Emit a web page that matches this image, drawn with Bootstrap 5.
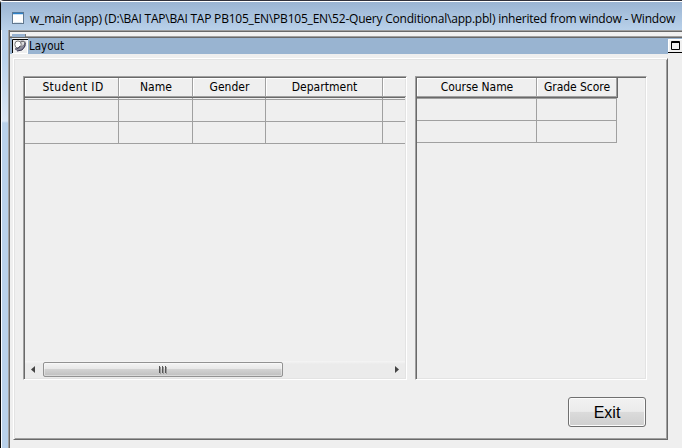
<!DOCTYPE html>
<html lang="en">
<head>
<meta charset="utf-8">
<meta name="viewport" content="width=device-width, initial-scale=1">
<title>w_main (app)</title>
<link href="https://cdn.jsdelivr.net/npm/bootstrap@5.3.0/dist/css/bootstrap.min.css" rel="stylesheet">
<style>
*{box-sizing:border-box}
body{width:682px;height:448px;margin:0;overflow:hidden;background:#efefef;color:#000;font-family:"DejaVu Sans Condensed","DejaVu Sans",sans-serif;font-stretch:condensed;font-size:12px;line-height:14px;white-space:nowrap}
.app-window{width:682px;height:448px;border-top:1px solid #30303a;border-left:1px solid #080808;border-top-left-radius:4px}
.frame-edge{width:9px;background:linear-gradient(#a0b7d2 0,#b7cfe9 30px,#b9d1ea 55px,#dbe7f5 119px,#b9d1ea 121px);border-left:1px solid #f8fbff;border-top:1px solid #fff;box-shadow:inset -1px 0 #696969,inset -2px 0 #a0a0a0}
.title-bar{height:29px;margin-left:-9px;padding-left:11px;background:linear-gradient(#9ab4d2,#b9d1ea);border-top:1px solid #fff;position:relative;font-family:"Open Sans","Noto Sans",sans-serif;font-stretch:normal;font-size:12px;letter-spacing:-.213px}
.title-icon{margin-top:10px}
.title-text{margin-left:6px;padding-top:9px;line-height:16px}
.strip{height:8px;border-top:1px solid #a0a0a0;border-bottom:1px solid #696969;background:#f1f1f1;box-shadow:inset 0 1px #696969,inset 0 -1px #a0a0a0;padding:3px 0 0 2px}
.strip i{display:block;width:14px;height:3px;background:#98b2d0;border-right:1px solid #777}
.layout-bar{height:16px;background:#99b4d1}
.tool-icon{margin-left:2px}
.layout-label{font-size:11.500px;margin:1px 0 0 1px}
.max-icon{margin-top:1px}
.form{width:655px;height:382px;margin:4px 0 0 3px;border:1px solid #fff;border-right-color:#696969;border-bottom-color:#696969;box-shadow:inset 1px 1px #e3e3e3,inset -1px -1px #a0a0a0;padding:17px 0 0 9px}
.pane{height:304px;border:1px solid #a0a0a0;border-right-color:#fff;border-bottom-color:#fff;box-shadow:inset 1px 1px #696969,inset -1px -1px #e3e3e3;padding:1px;overflow:hidden}
.pane-a{width:384px}.pane-b{width:232px;margin-left:8px}
.heads{height:20px;border-bottom:1px solid #696969;letter-spacing:.04px}
.heads div{height:19px;flex-shrink:0;border-right:1px solid #a0a0a0;border-bottom:1px solid #a0a0a0;text-align:center;padding:2px 0 0 1px;box-shadow:inset 1px 1px #fff}
.heads .wide-label{padding-left:3px;letter-spacing:.38px}
.pane-b .heads{letter-spacing:-.05px;border-right:1px solid #696969}
.cells{height:22px;border-bottom:1px solid #a0a0a0}
.cells div,.first-line div{border-right:1px solid #a0a0a0}
.first-line{height:2px;border-bottom:1px solid #a0a0a0}
.pane-b .first-line{height:1px;width:200px}
.w94{width:94px}.w74{width:74px}.w73{width:73px}.w117{width:117px}.w120{width:120px}.w80{width:80px}
.pane-a .rest{width:23px;border-right:0}
.pane-b .grid{width:201px}
.pane-b .cells{width:200px}
.scroll{height:17px;margin-top:217px;background:linear-gradient(#f5f5f5,#ebebeb 3px,#ebebeb)}
.thumb{width:240px;height:15px;margin-top:1px;border:1px solid #929292;border-radius:2px;background:linear-gradient(#f4f4f4,#e8e8e8 45%,#d2d2d2 50%,#bfbfbf);box-shadow:inset 0 0 0 1px #ffffff66}
.btn-exit{width:78px;height:30px;margin:17px 0 0 545px;padding:0;border:1px solid #707070;border-radius:3px;background:linear-gradient(#f2f2f2,#ebebeb 48%,#dbdbdb 50%,#cfcfcf);box-shadow:inset 0 0 0 1px #fbfbfb;color:#000;font:16px/29px "Liberation Sans",sans-serif}
</style>
</head>
<body>
<div class="app-window d-flex">
  <div class="frame-edge flex-shrink-0"></div>
  <main class="flex-grow-1">
    <header class="title-bar d-flex">
      <svg width="12" height="12" class="title-icon flex-shrink-0"><rect x=".5" y=".5" width="11" height="11" fill="#fff" stroke="#62788f"/><path d="M1 1.5h10" stroke="#2d81c9" stroke-width="1.5"/><path d="M2 10.5h8" stroke="#dce8f1"/></svg>
      <div class="title-text">w_main (app) (D:\BAI TAP\BAI TAP PB105_EN\PB105_EN\52-Query Conditional\app.pbl) inherited from window - Window</div>
    </header>
    <div class="strip"><i></i></div>
    <div class="layout-bar d-flex">
      <svg width="16" height="16" class="tool-icon flex-shrink-0"><path fill="#f0f0f0" d="M0 0h16v16H0z"/><path d="M.5 15V1.5H16" fill="none" stroke="#000"/><path d="M15.5 2v13.500H1" fill="none" stroke="#fff"/><path d="M8 3c3-1 5 0 6 1l-1 5-3 3-5 1-2-2 4-1 3-3z" fill="#8b8b9b"/><ellipse cx="6" cy="6.500" rx="3.200" ry="3.600" fill="#fff" stroke="#777"/><path d="M9 3.500h3l1 2-2 3" fill="#ddd" stroke="#777"/><path d="M3 11c2 0 4-1 5-3M5 13l5-1 3-4V5" stroke="#333350" fill="none"/></svg>
      <span class="layout-label">Layout</span>
      <svg width="14" height="15" class="max-icon ms-auto flex-shrink-0"><path fill="#f0f0f0" d="M0 0h14v15H0z"/><path d="M.5 14V.5H14" fill="none" stroke="#fff"/><path d="M0 13.500h14" stroke="#000"/><path d="M3.500 2.500h8v8h-8zM3 3.500h9" fill="none" stroke="#000"/></svg>
    </div>
    <section class="form">
      <div class="d-flex">
        <div class="pane pane-a">
          <div class="heads d-flex"><div class="w94 wide-label">Student ID</div><div class="w74">Name</div><div class="w73">Gender</div><div class="w117">Department</div><div class="rest"></div></div>
          <div class="first-line d-flex"><div class="w94"></div><div class="w74"></div><div class="w73"></div><div class="w117"></div></div>
          <div class="cells d-flex"><div class="w94"></div><div class="w74"></div><div class="w73"></div><div class="w117"></div></div>
          <div class="cells d-flex"><div class="w94"></div><div class="w74"></div><div class="w73"></div><div class="w117"></div></div>
          <div class="scroll d-flex">
            <svg width="18" height="17" class="flex-shrink-0"><path d="M10 5v7L6 8.500z" fill="#444"/></svg>
            <div class="thumb d-flex justify-content-center"><svg width="9" height="13"><path d="M.5 3v7M3.500 3v7M6.500 3v7" stroke="#555"/><path d="M1.500 4v7M4.500 4v7M7.500 4v7" stroke="#999"/></svg></div>
            <svg width="18" height="17" class="ms-auto"><path d="M8 5v7l4-3.500z" fill="#444"/></svg>
          </div>
        </div>
        <div class="pane pane-b"><div class="grid d-block">
          <div class="heads d-flex"><div class="w120">Course Name</div><div class="w80">Grade Score</div></div>
          <div class="first-line"></div>
          <div class="cells d-flex"><div class="w120"></div><div class="w80"></div></div>
          <div class="cells d-flex"><div class="w120"></div><div class="w80"></div></div>
        </div></div>
      </div>
      <button class="btn btn-exit d-block" type="button">Exit</button>
    </section>
  </main>
</div>
<script src="https://cdn.jsdelivr.net/npm/bootstrap@5.3.0/dist/js/bootstrap.bundle.min.js"></script>
</body>
</html>
